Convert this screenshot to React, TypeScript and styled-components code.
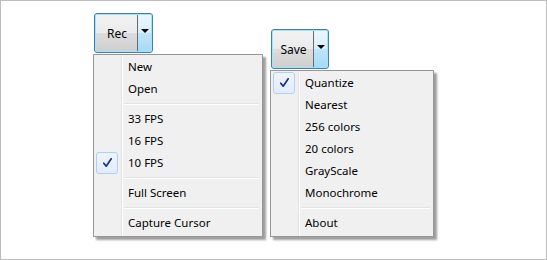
import styled, { createGlobalStyle } from "styled-components"

const GlobalStyle = createGlobalStyle`
  html, body {
    margin: 0;
    padding: 0;
    background: #ffffff;
  }

  body {
    font-family: "Segoe UI", "Noto Sans", sans-serif;
    font-size: 11.5px;
    color: #000000;
  }
`

type MenuEntry =
  | { kind: "item"; label: string; checked?: boolean }
  | { kind: "separator" }

const recMenu: MenuEntry[] = [
  { kind: "item", label: "New" },
  { kind: "item", label: "Open" },
  { kind: "separator" },
  { kind: "item", label: "33 FPS" },
  { kind: "item", label: "16 FPS" },
  { kind: "item", label: "10 FPS", checked: true },
  { kind: "separator" },
  { kind: "item", label: "Full Screen" },
  { kind: "separator" },
  { kind: "item", label: "Capture Cursor" },
]

const saveMenu: MenuEntry[] = [
  { kind: "item", label: "Quantize", checked: true },
  { kind: "item", label: "Nearest" },
  { kind: "item", label: "256 colors" },
  { kind: "item", label: "20 colors" },
  { kind: "item", label: "GrayScale" },
  { kind: "item", label: "Monochrome" },
  { kind: "separator" },
  { kind: "item", label: "About" },
]

const CheckIcon = () => (
  <svg width="9" height="10" viewBox="0 0 9 10">
    <path
      d="M0.8 5.2 L3.2 8.2 L8.2 0.8"
      fill="none"
      stroke="#1c2f86"
      strokeWidth="1.7"
      strokeLinecap="round"
      strokeLinejoin="round"
    />
  </svg>
)

const SplitButton = ({ label, width }: { label: string; width: number }) => (
  <ButtonFrame style={{ width }}>
    <ButtonMain>{label}</ButtonMain>
    <ButtonDivider />
    <ButtonDrop>
      <Arrow />
    </ButtonDrop>
  </ButtonFrame>
)

const Menu = ({ entries, width }: { entries: MenuEntry[]; width: number }) => (
  <MenuPanel style={{ width }}>
    {entries.map((entry, i) =>
      entry.kind === "separator" ? (
        <Separator key={i} />
      ) : (
        <Item key={i}>
          <CheckSlot>
            {entry.checked && (
              <CheckBox>
                <CheckIcon />
              </CheckBox>
            )}
          </CheckSlot>
          <Label>{entry.label}</Label>
        </Item>
      )
    )}
  </MenuPanel>
)

export default function App() {
  return (
    <>
      <GlobalStyle />
      <Frame>
        <Column>
          <SplitButton label="Rec" width={59} />
          <Menu entries={recMenu} width={170} />
        </Column>
        <Column $offset={16}>
          <SplitButton label="Save" width={58} />
          <Menu entries={saveMenu} width={164} />
        </Column>
      </Frame>
    </>
  )
}

const Frame = styled.div`
  box-sizing: border-box;
  display: flex;
  align-items: flex-start;
  gap: 7px;

  width: 547px;
  height: 260px;
  padding: 12px 0 0 92px;

  border: 1px solid #bdbdbd;
  background: #ffffff;
`

const Column = styled.div<{ $offset?: number }>`
  display: flex;
  flex-direction: column;
  align-items: flex-start;
  gap: 1px;

  margin-top: ${({ $offset }) => $offset ?? 0}px;
`

const ButtonFrame = styled.div`
  box-sizing: border-box;
  display: flex;
  align-items: stretch;

  height: 40px;
  margin-left: 1px;

  border: 1px solid #3c7fb1;
  border-radius: 3px;
  box-shadow: inset 0 0 0 1px #a6e3f8;
  overflow: hidden;
`

const ButtonMain = styled.div`
  flex: 1;
  display: flex;
  align-items: center;
  justify-content: center;

  padding-left: 1px;
  margin: 1px 0 1px 1px;

  background: linear-gradient(
    #f2f2f2 0%,
    #ebebeb 50%,
    #dddddd 50%,
    #cfcfcf 100%
  );

  font-size: 12px;
  color: #000000;
`

const ButtonDivider = styled.div`
  width: 1px;
  margin: 1px 0;
  background: #6b6b6b;
  box-shadow: 1px 0 0 #e8f6fd;
`

const ButtonDrop = styled.div`
  display: flex;
  align-items: center;
  justify-content: center;

  width: 13px;
  margin: 1px 1px 1px 0;

  background: linear-gradient(
    #eaf6fd 0%,
    #d9f0fc 50%,
    #bee6fd 50%,
    #a7d9f5 100%
  );
`

const Arrow = styled.div`
  width: 0;
  height: 0;
  margin-top: -4px;

  border-left: 4px solid transparent;
  border-right: 4px solid transparent;
  border-top: 4px solid #000000;
`

const MenuPanel = styled.div`
  box-sizing: border-box;
  display: flex;
  flex-direction: column;

  padding: 1px 2px 2px;

  border: 1px solid #979797;
  background-color: #f0f0f0;
  background-image: linear-gradient(
    to right,
    transparent 0,
    transparent 27px,
    #e2e3e3 27px,
    #e2e3e3 28px,
    #ffffff 28px,
    #ffffff 29px,
    transparent 29px
  );
  box-shadow: 3px 3px 2px rgba(0, 0, 0, 0.38);
`

const Item = styled.div`
  display: flex;
  align-items: center;

  height: 22px;

  white-space: nowrap;
  color: #000000;
`

const Label = styled.span`
  position: relative;
  top: -1px;
`

const CheckSlot = styled.div`
  display: flex;
  align-items: center;

  width: 32px;
  height: 100%;
  flex-shrink: 0;
`

const CheckBox = styled.div`
  box-sizing: border-box;
  display: flex;
  align-items: center;
  justify-content: center;

  width: 22px;
  height: 22px;

  border: 1px solid #aecff7;
  border-radius: 3px;
  background: linear-gradient(#eef4fd, #e2ecfb);
`

const Separator = styled.div`
  height: 1px;
  margin: 3px 1px 4px 28px;

  background: #e2e3e3;
  box-shadow: 0 1px 0 #ffffff;
`
